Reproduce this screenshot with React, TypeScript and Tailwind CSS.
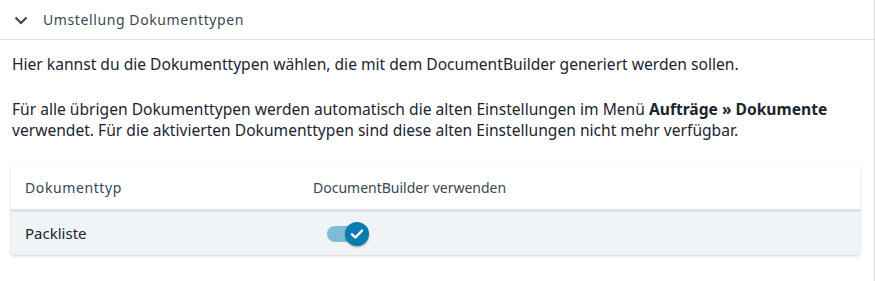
import React from 'react';

export default function App() {
  const font = { fontFamily: '"Noto Sans", "Open Sans", sans-serif' };

  return (
    <div className="w-[875px] h-[281px] bg-white overflow-hidden" style={font}>
      <div className="w-[875px] h-[281px] border-r border-[#d7dce1]">
        {/* Accordion header */}
        <div className="h-[40px] flex items-center border-b border-[#dfe3e7] pl-[13px]">
          <svg width="16" height="16" viewBox="0 0 16 16" className="text-[#3c4856]">
            <path d="M2.5 5.5 L8 11 L13.5 5.5" fill="none" stroke="currentColor" strokeWidth="2.2" />
          </svg>
          <span className="ml-[14px] text-[14px] tracking-[0.6px] text-[#3c4856]">Umstellung Dokumenttypen</span>
        </div>

        {/* Body */}
        <div className="px-[12px] pt-[14px] text-[15.6px] leading-[21px] text-[#1b2530]">
          <p>Hier kannst du die Dokumenttypen wählen, die mit dem DocumentBuilder generiert werden sollen.</p>
          <p className="mt-[24px]">
            Für alle übrigen Dokumenttypen werden automatisch die alten Einstellungen im Menü{' '}
            <span className="font-bold">Aufträge » Dokumente</span> verwendet. Für die aktivierten Dokumenttypen sind
            diese alten Einstellungen nicht mehr verfügbar.
          </p>
        </div>

        {/* Table card */}
        <div className="mx-[11px] mt-[25px] w-[849px] bg-white shadow-[0_1px_3px_rgba(0,0,0,0.18)] rounded-[2px]">
          <div className="h-[46px] flex items-center text-[14px] text-[#3a4653] border-b-[3px] border-[#dce3ea]">
            <div className="w-[302px] pl-[14px] tracking-[0.6px]">Dokumenttyp</div>
            <div className="tracking-[0px]">DocumentBuilder verwenden</div>
          </div>
          <div className="h-[43px] flex items-center bg-[#f0f4f7] text-[15px] text-[#1b2530]">
            <div className="w-[302px] pl-[14px]">Packliste</div>
            <div className="relative w-[45px] h-[24px] ml-[14px] flex items-center">
              <div className="w-[32px] h-[16px] rounded-full bg-[#7ebbd6]" />
              <div className="absolute left-[18px] top-0 w-[24px] h-[24px] rounded-full bg-[#0a7cb1] shadow-[0_1px_2px_rgba(0,0,0,0.35)] flex items-center justify-center">
                <svg width="16" height="16" viewBox="0 0 16 16">
                  <path d="M3 8.3 L6.4 11.5 L13 4.6" fill="none" stroke="white" strokeWidth="2.4" strokeLinecap="round" strokeLinejoin="round" />
                </svg>
              </div>
            </div>
          </div>
        </div>
      </div>
    </div>
  );
}
